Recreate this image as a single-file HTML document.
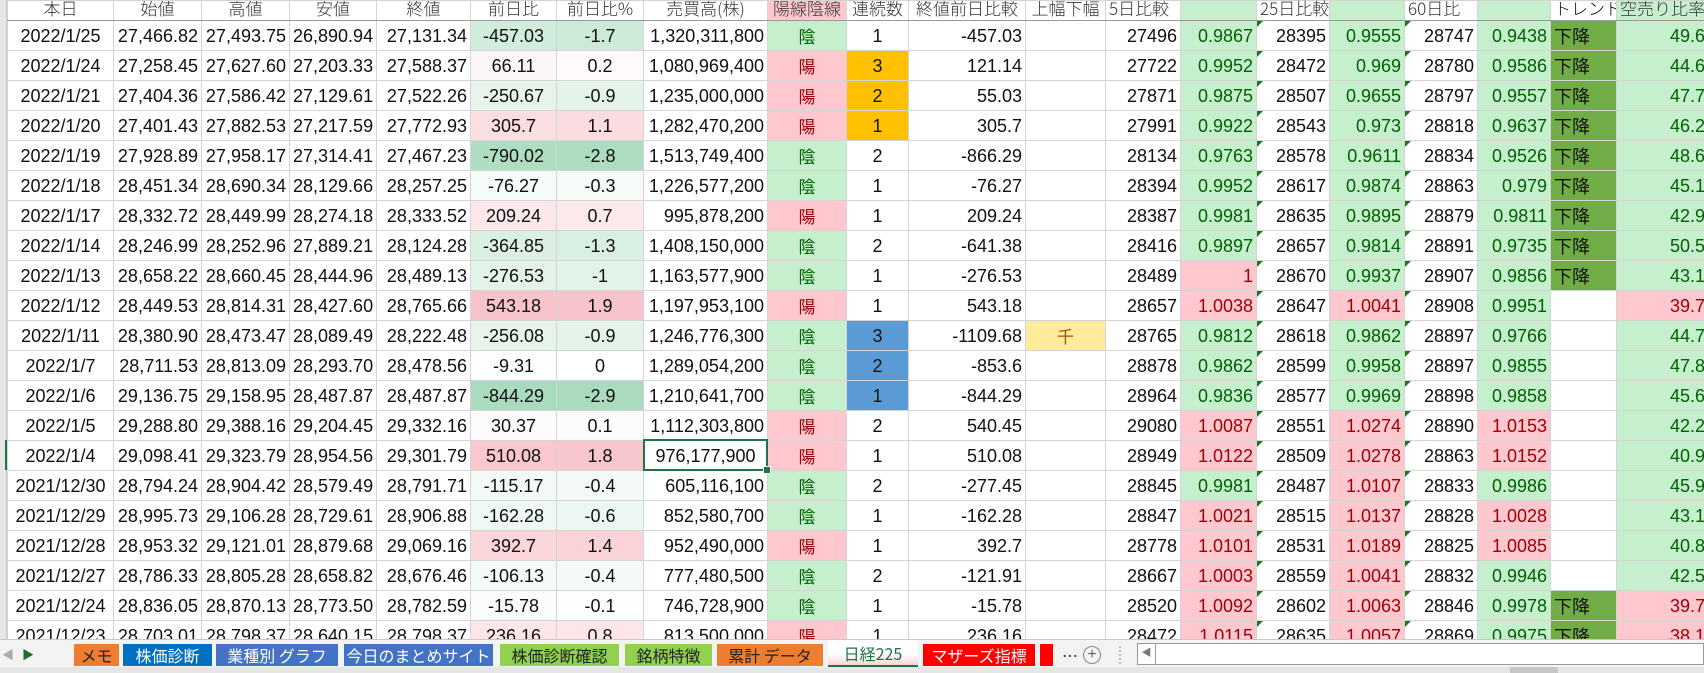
<!DOCTYPE html>
<html><head><meta charset="utf-8">
<style>
*{margin:0;padding:0;box-sizing:border-box}
body{width:1704px;height:673px;overflow:hidden;background:#fff;font-family:"Liberation Sans","Noto Sans CJK JP",sans-serif;position:relative}
#gut{position:absolute;left:0;top:0;width:7px;height:639px;background:#e6e6e6;border-right:1px solid #c8c8c8}
#sel{position:absolute;left:5px;top:440px;width:3px;height:30px;background:#217346}
#wrap{position:absolute;left:7px;top:0;width:1697px;height:639px;overflow:hidden}
table{border-collapse:collapse;table-layout:fixed;width:1701px}
td{border:1px solid #d4d4d4;height:30px;font-size:18px;white-space:nowrap;overflow:hidden;padding:0 3px;text-align:right;color:#111;line-height:28px}
tr.h td{height:20px;line-height:14px;font-size:17px;text-align:center;color:#333;border-bottom:1px solid #9a9a9a;vertical-align:top;font-family:"Noto Sans CJK JP",sans-serif;font-weight:300}
td.c{text-align:center}
td.l{text-align:left}
.g{background:#C6EFCE;color:#006100}
.p{background:#FFC7CE;color:#9C0006}
.o{background:#FFC000}
.b{background:#5B9BD5}
.t{background:#70AD47;text-align:left;color:#111;font-family:"Noto Sans CJK JP",sans-serif}
.y{background:#FFEB9C;color:#9C5700}
.j{font-family:"Noto Sans CJK JP",sans-serif;font-size:17px}
.tri{position:relative}
.tri:before{content:"";position:absolute;left:0;top:0;border-top:6px solid #1a7a1a;border-right:6px solid transparent}
#cur{position:absolute;left:643px;top:439px;width:125px;height:32px;border:2px solid #217346}
#cur:after{content:"";position:absolute;right:-5px;bottom:-5px;width:6px;height:6px;background:#217346;border:1px solid #fff}
#bar{position:absolute;left:0;top:639px;width:1704px;height:34px;background:#f3f3f3;border-top:1px solid #c8c8c8}
.tab{position:absolute;top:4px;height:22px;font-size:16px;line-height:22px;text-align:center;font-family:"Noto Sans CJK JP",sans-serif;white-space:nowrap;overflow:hidden}
#bot{position:absolute;left:0;top:667px;width:1704px;height:6px;background:#e6e6e6}
</style></head><body>
<div id="gut"></div><div id="sel"></div>
<div id="wrap"><table>
<colgroup><col style="width:106px"><col style="width:88px"><col style="width:88px"><col style="width:87px"><col style="width:94px"><col style="width:86px"><col style="width:87px"><col style="width:124px"><col style="width:79px"><col style="width:62px"><col style="width:117px"><col style="width:80px"><col style="width:75px"><col style="width:76px"><col style="width:73px"><col style="width:75px"><col style="width:73px"><col style="width:73px"><col style="width:66px"><col style="width:92px"></colgroup>
<tr class="h"><td>本日</td><td>始値</td><td>高値</td><td>安値</td><td>終値</td><td>前日比</td><td>前日比%</td><td>売買高(株)</td><td class="p">陽線陰線</td><td>連続数</td><td>終値前日比較</td><td>上幅下幅</td><td style="text-align:left">5日比較</td><td class="g"></td><td style="text-align:left;overflow:visible">25日比較</td><td class="g"></td><td style="text-align:left">60日比</td><td class="g"></td><td style="text-align:left;color:#111">トレンド</td><td class="g" style="text-align:left">空売り比率</td></tr>
<tr><td class="c">2022/1/25</td><td>27,466.82</td><td>27,493.75</td><td>26,890.94</td><td>27,131.34</td><td class="c" style="background:rgb(209,236,220)">-457.03</td><td class="c" style="background:rgb(205,234,217)">-1.7</td><td>1,320,311,800</td><td class="c g j">陰</td><td class="c">1</td><td>-457.03</td><td></td><td>27496</td><td class="g">0.9867</td><td class="tri">28395</td><td class="g">0.9555</td><td class="tri">28747</td><td class="g">0.9438</td><td class="t">下降</td><td class="g">49.6</td></tr>
<tr><td class="c">2022/1/24</td><td>27,258.45</td><td>27,627.60</td><td>27,203.33</td><td>27,588.37</td><td class="c" style="background:rgb(250,246,249)">66.11</td><td class="c" style="background:rgb(254,249,250)">0.2</td><td>1,080,969,400</td><td class="c p j">陽</td><td class="c o">3</td><td>121.14</td><td></td><td>27722</td><td class="g">0.9952</td><td class="tri">28472</td><td class="g">0.969</td><td class="tri">28780</td><td class="g">0.9586</td><td class="t">下降</td><td class="g">44.6</td></tr>
<tr><td class="c">2022/1/21</td><td>27,404.36</td><td>27,586.42</td><td>27,129.61</td><td>27,522.26</td><td class="c" style="background:rgb(230,244,236)">-250.67</td><td class="c" style="background:rgb(229,244,235)">-0.9</td><td>1,235,000,000</td><td class="c p j">陽</td><td class="c o">2</td><td>55.03</td><td></td><td>27871</td><td class="g">0.9875</td><td class="tri">28507</td><td class="g">0.9655</td><td class="tri">28797</td><td class="g">0.9557</td><td class="t">下降</td><td class="g">47.7</td></tr>
<tr><td class="c">2022/1/20</td><td>27,401.43</td><td>27,882.53</td><td>27,217.59</td><td>27,772.93</td><td class="c" style="background:rgb(251,222,226)">305.7</td><td class="c" style="background:rgb(251,221,225)">1.1</td><td>1,282,470,200</td><td class="c p j">陽</td><td class="c o">1</td><td>305.7</td><td></td><td>27991</td><td class="g">0.9922</td><td class="tri">28543</td><td class="g">0.973</td><td class="tri">28818</td><td class="g">0.9637</td><td class="t">下降</td><td class="g">46.2</td></tr>
<tr><td class="c">2022/1/19</td><td>27,928.89</td><td>27,958.17</td><td>27,314.41</td><td>27,467.23</td><td class="c" style="background:rgb(175,221,194)">-790.02</td><td class="c" style="background:rgb(173,220,192)">-2.8</td><td>1,513,749,400</td><td class="c g j">陰</td><td class="c">2</td><td>-866.29</td><td></td><td>28134</td><td class="g">0.9763</td><td class="tri">28578</td><td class="g">0.9611</td><td class="tri">28834</td><td class="g">0.9526</td><td class="t">下降</td><td class="g">48.6</td></tr>
<tr><td class="c">2022/1/18</td><td>28,451.34</td><td>28,690.34</td><td>28,129.66</td><td>28,257.25</td><td class="c" style="background:rgb(245,251,248)">-76.27</td><td class="c" style="background:rgb(247,251,248)">-0.3</td><td>1,226,577,200</td><td class="c g j">陰</td><td class="c">1</td><td>-76.27</td><td></td><td>28394</td><td class="g">0.9952</td><td class="tri">28617</td><td class="g">0.9874</td><td class="tri">28863</td><td class="g">0.979</td><td class="t">下降</td><td class="g">45.1</td></tr>
<tr><td class="c">2022/1/17</td><td>28,332.72</td><td>28,449.99</td><td>28,274.18</td><td>28,333.52</td><td class="c" style="background:rgb(252,232,235)">209.24</td><td class="c" style="background:rgb(252,233,236)">0.7</td><td>995,878,200</td><td class="c p j">陽</td><td class="c">1</td><td>209.24</td><td></td><td>28387</td><td class="g">0.9981</td><td class="tri">28635</td><td class="g">0.9895</td><td class="tri">28879</td><td class="g">0.9811</td><td class="t">下降</td><td class="g">42.9</td></tr>
<tr><td class="c">2022/1/14</td><td>28,246.99</td><td>28,252.96</td><td>27,889.21</td><td>28,124.28</td><td class="c" style="background:rgb(218,240,227)">-364.85</td><td class="c" style="background:rgb(217,239,226)">-1.3</td><td>1,408,150,000</td><td class="c g j">陰</td><td class="c">2</td><td>-641.38</td><td></td><td>28416</td><td class="g">0.9897</td><td class="tri">28657</td><td class="g">0.9814</td><td class="tri">28891</td><td class="g">0.9735</td><td class="t">下降</td><td class="g">50.5</td></tr>
<tr><td class="c">2022/1/13</td><td>28,658.22</td><td>28,660.45</td><td>28,444.96</td><td>28,489.13</td><td class="c" style="background:rgb(227,243,234)">-276.53</td><td class="c" style="background:rgb(226,243,233)">-1</td><td>1,163,577,900</td><td class="c g j">陰</td><td class="c">1</td><td>-276.53</td><td></td><td>28489</td><td class="p">1</td><td class="tri">28670</td><td class="g">0.9937</td><td class="tri">28907</td><td class="g">0.9856</td><td class="t">下降</td><td class="g">43.1</td></tr>
<tr><td class="c">2022/1/12</td><td>28,449.53</td><td>28,814.31</td><td>28,427.60</td><td>28,765.66</td><td class="c" style="background:rgb(248,196,203)">543.18</td><td class="c" style="background:rgb(248,196,203)">1.9</td><td>1,197,953,100</td><td class="c p j">陽</td><td class="c">1</td><td>543.18</td><td></td><td>28657</td><td class="p">1.0038</td><td class="tri">28647</td><td class="p">1.0041</td><td class="tri">28908</td><td class="g">0.9951</td><td></td><td class="p">39.7</td></tr>
<tr><td class="c">2022/1/11</td><td>28,380.90</td><td>28,473.47</td><td>28,089.49</td><td>28,222.48</td><td class="c" style="background:rgb(230,244,236)">-256.08</td><td class="c" style="background:rgb(229,244,235)">-0.9</td><td>1,246,776,300</td><td class="c g j">陰</td><td class="c b">3</td><td>-1109.68</td><td class="c y j">千</td><td>28765</td><td class="g">0.9812</td><td class="tri">28618</td><td class="g">0.9862</td><td class="tri">28897</td><td class="g">0.9766</td><td></td><td class="g">44.7</td></tr>
<tr><td class="c">2022/1/7</td><td>28,711.53</td><td>28,813.09</td><td>28,293.70</td><td>28,478.56</td><td class="c" style="background:rgb(252,254,253)">-9.31</td><td class="c">0</td><td>1,289,054,200</td><td class="c g j">陰</td><td class="c b">2</td><td>-853.6</td><td></td><td>28878</td><td class="g">0.9862</td><td class="tri">28599</td><td class="g">0.9958</td><td class="tri">28897</td><td class="g">0.9855</td><td></td><td class="g">47.8</td></tr>
<tr><td class="c">2022/1/6</td><td>29,136.75</td><td>29,158.95</td><td>28,487.87</td><td>28,487.87</td><td class="c" style="background:rgb(170,219,190)">-844.29</td><td class="c" style="background:rgb(170,219,190)">-2.9</td><td>1,210,641,700</td><td class="c g j">陰</td><td class="c b">1</td><td>-844.29</td><td></td><td>28964</td><td class="g">0.9836</td><td class="tri">28577</td><td class="g">0.9969</td><td class="tri">28898</td><td class="g">0.9858</td><td></td><td class="g">45.6</td></tr>
<tr><td class="c">2022/1/5</td><td>29,288.80</td><td>29,388.16</td><td>29,204.45</td><td>29,332.16</td><td class="c" style="background:rgb(253,251,253)">30.37</td><td class="c" style="background:rgb(253,252,253)">0.1</td><td>1,112,303,800</td><td class="c p j">陽</td><td class="c">2</td><td>540.45</td><td></td><td>29080</td><td class="p">1.0087</td><td class="tri">28551</td><td class="p">1.0274</td><td class="tri">28890</td><td class="p">1.0153</td><td></td><td class="g">42.2</td></tr>
<tr><td class="c">2022/1/4</td><td>29,098.41</td><td>29,323.79</td><td>28,954.56</td><td>29,301.79</td><td class="c" style="background:rgb(248,200,206)">510.08</td><td class="c" style="background:rgb(248,199,206)">1.8</td><td style="text-align:center">976,177,900</td><td class="c p j">陽</td><td class="c">1</td><td>510.08</td><td></td><td>28949</td><td class="p">1.0122</td><td class="tri">28509</td><td class="p">1.0278</td><td class="tri">28863</td><td class="p">1.0152</td><td></td><td class="g">40.9</td></tr>
<tr><td class="c">2021/12/30</td><td>28,794.24</td><td>28,904.42</td><td>28,579.49</td><td>28,791.71</td><td class="c" style="background:rgb(243,250,246)">-115.17</td><td class="c" style="background:rgb(243,250,246)">-0.4</td><td>605,116,100</td><td class="c g j">陰</td><td class="c">2</td><td>-277.45</td><td></td><td>28845</td><td class="g">0.9981</td><td class="tri">28487</td><td class="p">1.0107</td><td class="tri">28833</td><td class="g">0.9986</td><td></td><td class="g">45.9</td></tr>
<tr><td class="c">2021/12/29</td><td>28,995.73</td><td>29,106.28</td><td>28,729.61</td><td>28,906.88</td><td class="c" style="background:rgb(239,248,243)">-162.28</td><td class="c" style="background:rgb(237,247,241)">-0.6</td><td>852,580,700</td><td class="c g j">陰</td><td class="c">1</td><td>-162.28</td><td></td><td>28847</td><td class="p">1.0021</td><td class="tri">28515</td><td class="p">1.0137</td><td class="tri">28828</td><td class="p">1.0028</td><td></td><td class="g">43.1</td></tr>
<tr><td class="c">2021/12/28</td><td>28,953.32</td><td>29,121.01</td><td>28,879.68</td><td>29,069.16</td><td class="c" style="background:rgb(250,213,218)">392.7</td><td class="c" style="background:rgb(250,211,217)">1.4</td><td>952,490,000</td><td class="c p j">陽</td><td class="c">1</td><td>392.7</td><td></td><td>28778</td><td class="p">1.0101</td><td class="tri">28531</td><td class="p">1.0189</td><td class="tri">28825</td><td class="p">1.0085</td><td></td><td class="g">40.8</td></tr>
<tr><td class="c">2021/12/27</td><td>28,786.33</td><td>28,805.28</td><td>28,658.82</td><td>28,676.46</td><td class="c" style="background:rgb(244,250,247)">-106.13</td><td class="c" style="background:rgb(243,250,246)">-0.4</td><td>777,480,500</td><td class="c g j">陰</td><td class="c">2</td><td>-121.91</td><td></td><td>28667</td><td class="p">1.0003</td><td class="tri">28559</td><td class="p">1.0041</td><td class="tri">28832</td><td class="g">0.9946</td><td></td><td class="g">42.5</td></tr>
<tr><td class="c">2021/12/24</td><td>28,836.05</td><td>28,870.13</td><td>28,773.50</td><td>28,782.59</td><td class="c" style="background:rgb(250,251,252)">-15.78</td><td class="c" style="background:rgb(252,254,253)">-0.1</td><td>746,728,900</td><td class="c g j">陰</td><td class="c">1</td><td>-15.78</td><td></td><td>28520</td><td class="p">1.0092</td><td class="tri">28602</td><td class="p">1.0063</td><td class="tri">28846</td><td class="g">0.9978</td><td class="t">下降</td><td class="p">39.7</td></tr>
<tr><td class="c">2021/12/23</td><td>28,703.01</td><td>28,798.37</td><td>28,640.15</td><td>28,798.37</td><td class="c" style="background:rgb(252,230,233)">236.16</td><td class="c" style="background:rgb(252,230,233)">0.8</td><td>813,500,000</td><td class="c p j">陽</td><td class="c">1</td><td>236.16</td><td></td><td>28472</td><td class="p">1.0115</td><td class="tri">28635</td><td class="p">1.0057</td><td class="tri">28869</td><td class="g">0.9975</td><td class="t">下降</td><td class="p">38.1</td></tr>
</table></div>
<div id="cur"></div>
<div id="bar">
<div class="tab" style="left:2px;width:12px;color:#aaa;font-size:12px">◀</div>
<div class="tab" style="left:22px;width:12px;color:#1d6b2a;font-size:12px">▶</div>
<div class="tab" style="left:74px;width:45px;background:#ED7D31;color:#222">メモ</div>
<div class="tab" style="left:123px;width:89px;background:#0070C0;color:#fff">株価診断</div>
<div class="tab" style="left:216px;width:122px;background:#4472C4;color:#fff">業種別 グラフ</div>
<div class="tab" style="left:344px;width:149px;background:#4472C4;color:#fff">今日のまとめサイト</div>
<div class="tab" style="left:500px;width:119px;background:#92D050;color:#222">株価診断確認</div>
<div class="tab" style="left:625px;width:87px;background:#92D050;color:#222">銘柄特徴</div>
<div class="tab" style="left:717px;width:106px;background:#ED7D31;color:#222">累計 データ</div>
<div class="tab" style="left:828px;width:90px;top:0;height:28px;line-height:26px;background:linear-gradient(#fff 55%,#f9d4d6);color:#217346;border-bottom:3px solid #217346">日経225</div>
<div class="tab" style="left:923px;width:112px;background:#FF0000;color:#fff">マザーズ指標</div>
<div class="tab" style="left:1040px;width:13px;background:#FF0000"></div>
<div class="tab" style="left:1060px;width:20px;color:#333">…</div>
<div style="position:absolute;left:1083px;top:6px;width:18px;height:18px;border:1px solid #888;border-radius:50%;text-align:center;line-height:15px;font-size:16px;color:#666">+</div>
<div style="position:absolute;left:1119px;top:6px;width:2px;height:18px;border-left:2px dotted #bbb"></div>
<div style="position:absolute;left:1137px;top:3px;width:567px;height:22px;background:#fff;border:1px solid #999"><div style="position:absolute;left:0;top:0;width:18px;height:20px;border-right:1px solid #999;color:#777;font-size:10px;line-height:20px;text-align:center">◀</div></div>
</div>
<div id="bot"><div style="position:absolute;left:1510px;top:0;width:48px;height:6px;background:#c6c6c6"></div></div>
</body></html>
